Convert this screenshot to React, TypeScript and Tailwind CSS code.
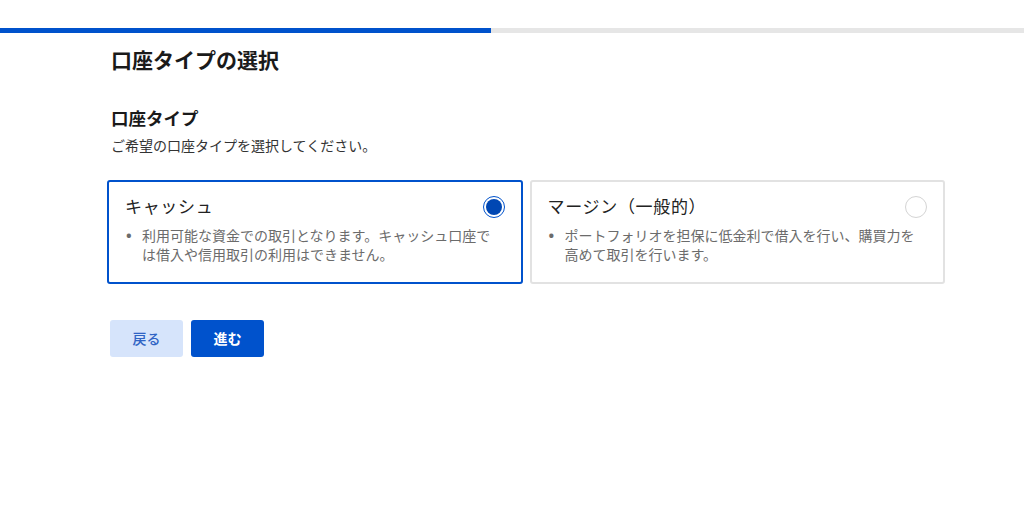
const options = [
  {
    title: "キャッシュ",
    note: "利用可能な資金での取引となります。キャッシュ口座では借入や信用取引の利用はできません。",
    selected: true,
  },
  {
    title: "マージン（一般的）",
    note: "ポートフォリオを担保に低金利で借入を行い、購買力を高めて取引を行います。",
    selected: false,
  },
];

export default function App() {
  return (
    <div
      className="min-h-[525px] w-[1024px] bg-white text-[#1a1a1a]"
      style={{ fontFamily: '"Noto Sans", "Noto Sans CJK JP", sans-serif' }}
    >
      <div className="pt-[28px]">
        <div className="flex h-[5px] w-full bg-[#e6e6e6]">
          <div className="h-full w-[491px] bg-[#0052cc]" />
        </div>
      </div>

      <div className="ml-[107px] w-[838px]">
        <h1 className="mt-[11px] pl-[4px] text-[21px] font-bold leading-[32px]">
          口座タイプの選択
        </h1>

        <h2 className="mt-[29px] pl-[4px] text-[17.5px] font-bold leading-[26px]">
          口座タイプ
        </h2>
        <p className="mt-[5px] pl-[4px] text-[14px] leading-[20px] text-[#333]">
          ご希望の口座タイプを選択してください。
        </p>

        <div className="mt-[24px] grid grid-cols-2 gap-[7px]">
          {options.map((o) => (
            <div
              key={o.title}
              className={`flex h-[104px] flex-col rounded-[3px] px-[16px] pt-[12px] ${
                o.selected
                  ? "border-2 border-[#0052cc]"
                  : "border-2 border-[#e2e2e2]"
              }`}
            >
              <div className="flex items-center justify-between">
                <span className="text-[17px] leading-[26px] tracking-[0.04em] text-[#222]">
                  {o.title}
                </span>
                {o.selected ? (
                  <span className="flex h-[22px] w-[22px] items-center justify-center rounded-full border-[1.5px] border-[#0052cc]">
                    <span className="h-[16px] w-[16px] rounded-full bg-[#0047b3]" />
                  </span>
                ) : (
                  <span className="h-[22px] w-[22px] rounded-full border border-[#d4d4d4]" />
                )}
              </div>
              <div className="mt-[6px] flex text-[14px] leading-[19px] text-[#6b6b6b]">
                <span className="w-[17px] shrink-0 pl-[1px] text-[15px] font-bold">•</span>
                <span className="pr-[4px]">{o.note}</span>
              </div>
            </div>
          ))}
        </div>

        <div className="mt-[36px] flex gap-[8px] pl-[3px]">
          <button className="h-[37px] w-[73px] rounded-[3px] bg-[#d6e4fb] text-[14px] font-medium text-[#2f63c4]">
            戻る
          </button>
          <button className="h-[37px] w-[73px] rounded-[3px] bg-[#0052cc] text-[14px] font-bold text-white">
            進む
          </button>
        </div>
      </div>
    </div>
  );
}
